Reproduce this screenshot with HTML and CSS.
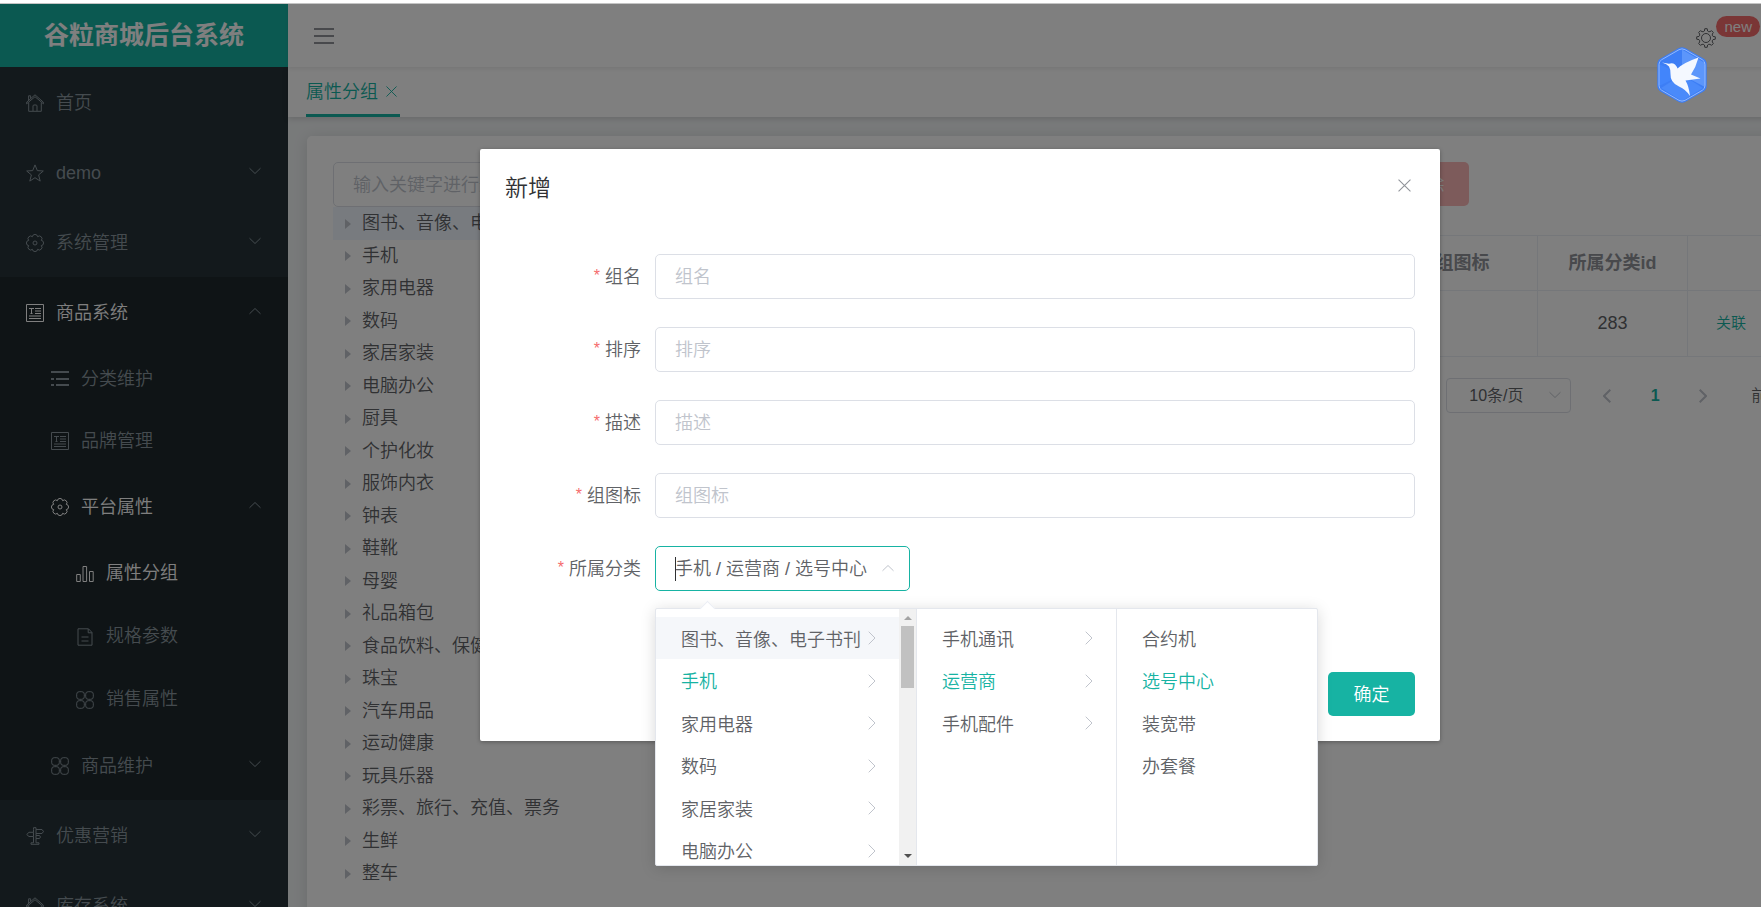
FILE: index.html
```html
<!DOCTYPE html>
<html lang="zh-CN">
<head>
<meta charset="utf-8">
<title>谷粒商城后台系统</title>
<link rel="stylesheet" href="styles.css">
</head>
<body>
<svg class="sprite" aria-hidden="true">
  <symbol id="i-home" viewBox="0 0 18 18"><path d="M.6 9.800v-1.600L9 .800l8.400 7.400v1.600L9 2.700zM2.600 6.300V1.800h2v2.700M2.700 8.500v8.800h12.600V8.500M7 17v-5q0-1 1-1h2q1 0 1 1v5"/></symbol>
  <symbol id="i-star" viewBox="0 0 18 18"><path d="m9 .9 2.300 5.700 6 .4-4.700 3.900 1.600 6.200L9 13.700l-5.200 3.400 1.600-6.200L.7 7l6-.4z"/></symbol>
  <symbol id="i-gear" viewBox="0 0 18 18"><circle cx="9" cy="9" r="2"/><path d="M15.300 11.600a2.620 2.620 0 0 1-3.700 3.700 2.620 2.620 0 0 1-5.200 0 2.620 2.620 0 0 1-3.700-3.700 2.620 2.620 0 0 1 0-5.200 2.620 2.620 0 0 1 3.700-3.700 2.620 2.620 0 0 1 5.200 0 2.620 2.620 0 0 1 3.700 3.700 2.620 2.620 0 0 1 0 5.200z"/></symbol>
  <symbol id="i-cog" viewBox="0 0 20 20"><circle cx="10" cy="10" r="4.500"/><path d="M8.800.7H11.200L11.600 3Q12.800 4.200 14 3.600L15.600 2.700 17.300 4.400 16.400 6Q15.800 7.200 17 8.400L19.300 8.800V11.200L17 11.600Q15.800 12.800 16.400 14L17.300 15.600 15.600 17.300 14 16.400Q12.800 15.800 11.600 17L11.200 19.300H8.800L8.400 17Q7.200 15.800 6 16.400L4.400 17.300 2.700 15.600 3.600 14Q4.200 12.800 3 11.600L.7 11.200V8.800L3 8.400Q4.200 7.200 3.600 6L2.700 4.400 4.400 2.700 6 3.600Q7.200 4.200 8.400 3Z"/></symbol>
  <symbol id="i-article" viewBox="0 0 18 18"><path d="M.5.500h17v17H.5zM3 4.500h5M5.500 4.500v5M4.500 9.500h2M9 4.500h6M9 7h6M9 9.500h6M3 12h12M3 14.500h12"/></symbol>
  <symbol id="i-list" viewBox="0 0 18 18"><path stroke-width="2" d="M0 2h18M0 9h3M5 9h13M0 15h3M5 15h13"/></symbol>
  <symbol id="i-bars" viewBox="0 0 18 18"><path d="M.7 9.500h3.600v7H.7zM7 1.500h3.600v15H7zM13.500 6.500h3.700v10h-3.700z"/></symbol>
  <symbol id="i-doc" viewBox="0 0 18 18"><path d="M2 .8h10.500L16 4.500v12.700H2zM12.200 1v3.800H16M5.500 9h7M5.500 13h7"/></symbol>
  <symbol id="i-grid" viewBox="0 0 18 18"><rect x=".7" y=".7" width="7.600" height="7.600" rx="2.500"/><rect x="9.700" y=".7" width="7.600" height="7.600" rx="2.500"/><rect x=".7" y="9.700" width="7.600" height="7.600" rx="2.500"/><rect x="9.700" y="9.700" width="7.600" height="7.600" rx="2.500"/></symbol>
  <symbol id="i-sign" viewBox="0 0 18 18"><path d="M7.500 2.500V.7h2.500v1.800h6l1.500 2L16 6.500h-6v2h3.500l1 1.500-1 1.500H10v4.300h3v1.500H5v-1.500h2.500V9.500H3L.7 7.500 3 5.300h4.500zM7.500 5.300v4.200M10 2.500v4M10 8.500v3"/></symbol>
  <symbol id="i-down" viewBox="0 0 12 8"><path d="m.5 1.200 5.500 5.300 5.500-5.300"/></symbol>
  <symbol id="i-up" viewBox="0 0 12 8"><path d="M.5 6.800 6 1.500l5.500 5.300"/></symbol>
  <symbol id="i-right" viewBox="0 0 8 14"><path d="m.7.700 6.300 6.300-6.300 6.300"/></symbol>
  <symbol id="i-left" viewBox="0 0 8 14"><path d="M7.300.700 1 7l6.300 6.300"/></symbol>
  <symbol id="i-close" viewBox="0 0 12 12"><path d="m.5.500 11 11M11.500.500l-11 11"/></symbol>
  <symbol id="i-menu" viewBox="0 0 20 16"><path d="M0 1h20M0 8h20M0 15h20"/></symbol>
</svg>

<div class="app">
  <aside class="sidebar">
    <h1 class="brand">谷粒商城后台系统</h1>
    <nav>
      <ul class="menu">
        <li><a class="item" href="#"><svg class="icon"><use href="#i-home"/></svg>首页</a></li>
        <li><a class="item" href="#"><svg class="icon"><use href="#i-star"/></svg>demo<svg class="fold"><use href="#i-down"/></svg></a></li>
        <li><a class="item" href="#"><svg class="icon"><use href="#i-gear"/></svg>系统管理<svg class="fold"><use href="#i-down"/></svg></a></li>
        <li class="open">
          <a class="item lit" href="#"><svg class="icon"><use href="#i-article"/></svg>商品系统<svg class="fold"><use href="#i-up"/></svg></a>
          <ul class="menu">
            <li><a class="item leaf2" href="#"><svg class="icon"><use href="#i-list"/></svg>分类维护</a></li>
            <li><a class="item leaf2" href="#"><svg class="icon"><use href="#i-article"/></svg>品牌管理</a></li>
            <li>
              <a class="item sub2 lit" href="#"><svg class="icon"><use href="#i-gear"/></svg>平台属性<svg class="fold"><use href="#i-up"/></svg></a>
              <ul class="menu">
                <li><a class="item leaf3 lit" href="#"><svg class="icon"><use href="#i-bars"/></svg>属性分组</a></li>
                <li><a class="item leaf3" href="#"><svg class="icon"><use href="#i-doc"/></svg>规格参数</a></li>
                <li><a class="item leaf3" href="#"><svg class="icon"><use href="#i-grid"/></svg>销售属性</a></li>
              </ul>
            </li>
            <li><a class="item sub2" href="#"><svg class="icon"><use href="#i-grid"/></svg>商品维护<svg class="fold"><use href="#i-down"/></svg></a></li>
          </ul>
        </li>
        <li><a class="item" href="#"><svg class="icon"><use href="#i-sign"/></svg>优惠营销<svg class="fold"><use href="#i-down"/></svg></a></li>
        <li><a class="item" href="#"><svg class="icon"><use href="#i-home"/></svg>库存系统<svg class="fold"><use href="#i-down"/></svg></a></li>
      </ul>
    </nav>
  </aside>

  <div class="main">
    <header class="topbar">
      <button class="plain" type="button" aria-label="折叠菜单"><svg class="burger"><use href="#i-menu"/></svg></button>
      <a class="settings" href="#" aria-label="设置"><svg class="cog"><use href="#i-cog"/></svg><sup class="badge">new</sup></a>
    </header>
    <div class="tabs">
      <div class="tab"><a href="#">属性分组</a><button class="plain" type="button" aria-label="关闭标签"><svg class="tab-close"><use href="#i-close"/></svg></button></div>
    </div>
    <main class="content">
      <section class="card">
        <div class="tree-pane">
          <input class="box" type="text" placeholder="输入关键字进行过滤" aria-label="过滤分类">
          <ul class="tree">
            <li class="current">图书、音像、电子书刊</li>
            <li>手机</li><li>家用电器</li><li>数码</li><li>家居家装</li><li>电脑办公</li><li>厨具</li>
            <li>个护化妆</li><li>服饰内衣</li><li>钟表</li><li>鞋靴</li><li>母婴</li><li>礼品箱包</li>
            <li>食品饮料、保健食品</li><li>珠宝</li><li>汽车用品</li><li>运动健康</li><li>玩具乐器</li>
            <li>彩票、旅行、充值、票务</li><li>生鲜</li><li>整车</li>
          </ul>
        </div>
        <div class="table-pane">
          <div class="toolbar"><button class="btn danger" type="button" disabled>批量删除</button></div>
          <table class="grid">
            <colgroup><col><col class="c-mid"><col class="c-mid"><col class="c-ops"></colgroup>
            <thead><tr><th></th><th>组图标</th><th>所属分类id</th><th></th></tr></thead>
            <tbody><tr><td></td><td></td><td>283</td><td class="ops"><a href="#">关联</a></td></tr></tbody>
          </table>
          <div class="pager">
            <div class="size">
              <select aria-label="每页条数"><option>10条/页</option></select>
              <svg class="fold"><use href="#i-down"/></svg>
            </div>
            <button class="plain" type="button" aria-label="上一页"><svg class="step"><use href="#i-left"/></svg></button>
            <button class="plain page" type="button">1</button>
            <button class="plain" type="button" aria-label="下一页"><svg class="step"><use href="#i-right"/></svg></button>
            <span class="jump">前往</span>
          </div>
        </div>
      </section>
    </main>
  </div>

  <div class="mask">
    <div class="dialog" role="dialog" aria-labelledby="dialog-title">
      <div class="dialog-head">
        <h2 id="dialog-title">新增</h2>
        <button class="plain" type="button" aria-label="关闭"><svg class="dialog-close"><use href="#i-close"/></svg></button>
      </div>
      <form class="form">
        <div class="row"><label for="f-name">组名</label><input class="box" id="f-name" type="text" placeholder="组名"></div>
        <div class="row"><label for="f-sort">排序</label><input class="box" id="f-sort" type="text" placeholder="排序"></div>
        <div class="row"><label for="f-desc">描述</label><input class="box" id="f-desc" type="text" placeholder="描述"></div>
        <div class="row"><label for="f-icon">组图标</label><input class="box" id="f-icon" type="text" placeholder="组图标"></div>
        <div class="row">
          <label for="f-cat">所属分类</label>
          <div class="cascader">
            <input class="box focus" id="f-cat" type="text" value="手机 / 运营商 / 选号中心">
            <span class="caret"></span>
            <svg class="cascader-up"><use href="#i-up"/></svg>
            <div class="panel">
              <ul class="options first">
                <li class="hover">图书、音像、电子书刊<svg><use href="#i-right"/></svg></li>
                <li class="chosen">手机<svg><use href="#i-right"/></svg></li>
                <li>家用电器<svg><use href="#i-right"/></svg></li>
                <li>数码<svg><use href="#i-right"/></svg></li>
                <li>家居家装<svg><use href="#i-right"/></svg></li>
                <li>电脑办公<svg><use href="#i-right"/></svg></li>
              </ul>
              <div class="scroll"><i class="s-up"></i><i class="s-thumb"></i><i class="s-down"></i></div>
              <ul class="options">
                <li>手机通讯<svg><use href="#i-right"/></svg></li>
                <li class="chosen">运营商<svg><use href="#i-right"/></svg></li>
                <li>手机配件<svg><use href="#i-right"/></svg></li>
              </ul>
              <ul class="options">
                <li>合约机</li>
                <li class="chosen">选号中心</li>
                <li>装宽带</li>
                <li>办套餐</li>
              </ul>
            </div>
          </div>
        </div>
      </form>
      <div class="dialog-foot"><button class="btn primary" type="button">确定</button></div>
    </div>
  </div>
</div>

<svg class="bird" viewBox="0 0 50 56" aria-hidden="true">
  <path fill="#3d7ef5" d="M21.500 1.200q3.500-2 7 0l18 10.300q3.200 2 3.200 5.700v21.600q0 3.700-3.200 5.700l-18 10.300q-3.500 2-7 0l-18-10.300Q.3 42.500.3 38.800V17.200q0-3.700 3.200-5.700z"/>
  <path fill="#5c96fb" d="M25 2.500 48 16v24L25 28z"/>
  <path fill="#4285fb" d="M2 17v22l23-11z"/>
  <path fill="#4a8afa" d="m4 41 21-13 21 13-21 13z"/>
  <path fill="none" stroke="#93b9fd" d="M22 2.700q3-1.700 6 0l17.300 10q2.700 1.600 2.700 4.800v21q0 3.200-2.700 4.800L28 53.300q-3 1.700-6 0L4.700 43.300Q2 41.700 2 38.500v-21q0-3.200 2.700-4.800z"/>
  <path fill="#f4f8ff" d="M5 15.500l7 1.200q3.500-1.200 6 .8 2 2.200 2.500 4Q27 15.500 41.500 10.500 39 20 34 27.500l9.500 4L28.500 33.500q3.500 6 4.500 15.500-4-6.500-11-9.500-9-4-8.500-12.500 0-5-1.500-7.500-2-2.500-7-4z"/>
</svg>
</body>
</html>
```
FILE: styles.css
```css
* { box-sizing: border-box; }
body {
  margin: 0;
  padding-top: 3px;
  height: 100vh;
  overflow: hidden;
  background: #fff;
  font: 18px/1.5 "Liberation Sans", "Noto Sans CJK SC", sans-serif;
  font-weight: 350;
  color: #606266;
}
ul { list-style: none; margin: 0; padding: 0; }
a { color: inherit; text-decoration: none; }
h1, h2 { margin: 0; }
input, select, button { font: inherit; color: inherit; }
svg { fill: none; stroke: currentColor; flex: none; }
.sprite { position: absolute; width: 0; height: 0; }
.plain { border: 0; padding: 0; background: none; display: flex; align-items: center; }

.app {
  position: relative;
  display: flex;
  min-width: 1920px;
  height: 100%;
  overflow: hidden;
  border-top: 1px solid #c4c4c4;
}

/* sidebar */
.sidebar { width: 288px; flex: none; background: #263238; color: #8a979e; }
.brand {
  height: 63px;
  line-height: 63px;
  background: #17b3a3;
  color: #fff;
  font-size: 25px;
  font-weight: 700;
  text-align: center;
}
.item { display: flex; align-items: center; height: 70px; padding: 2px 27px 0 26px; }
.icon { width: 18px; height: 18px; margin-right: 12px; overflow: visible; }
.fold { width: 12px; height: 8px; margin-left: auto; }
.item .fold { margin-bottom: 5px; }
.open { background: #1e282c; }
.lit { color: #fff; }
.lit .fold { color: #8a979e; }
.leaf2 { height: 62px; padding-left: 51px; }
.sub2 { padding-left: 51px; }
.leaf3 { height: 63px; padding-left: 76px; }

/* header and tabs */
.main { flex: 1; min-width: 0; display: flex; flex-direction: column; background: #f1f4f5; }
.topbar {
  position: relative;
  z-index: 1;
  display: flex;
  justify-content: space-between;
  align-items: center;
  height: 63px;
  flex: none;
  padding: 0 160px 0 26px;
  background: #fff;
  box-shadow: 0 2px 4px rgba(0, 0, 0, .08);
}
.burger { width: 20px; height: 16px; stroke-width: 2; color: #909399; }
.settings { display: flex; align-items: center; height: 100%; }
.cog { width: 20px; height: 20px; margin-top: 4px; }
.badge {
  align-self: flex-start;
  margin-top: 12px;
  padding: 0 8px;
  border-radius: 11px;
  background: #f56c6c;
  color: #fff;
  font-size: 15px;
  line-height: 21px;
}
.tabs {
  height: 50px;
  flex: none;
  padding: 0 18px;
  display: flex;
  background: #fff;
  box-shadow: 0 2px 6px rgba(0, 0, 0, .14);
}
.tab {
  display: flex;
  align-items: center;
  gap: 8px;
  padding: 3px 3px 0 0;
  border-bottom: 3px solid #17b3a3;
  color: #17b3a3;
}
.tab-close { width: 11px; height: 11px; margin-bottom: 2px; }

/* content */
.content { padding: 19px; }
.card {
  display: grid;
  grid-template-columns: 1fr 3fr;
  gap: 25px;
  padding: 26px;
  border-radius: 5px;
  background: #fff;
  box-shadow: 0 2px 15px rgba(0, 0, 0, .12);
}
.box {
  display: block;
  width: 100%;
  height: 45px;
  padding: 2px 19px 0;
  border: 1px solid #dcdfe6;
  border-radius: 5px;
  background: #fff;
  outline: 0;
}
.box::placeholder { color: #c0c4cc; opacity: 1; }
.tree li { display: flex; align-items: center; height: 32px; padding-left: 12px; }
.tree li:nth-child(odd) { height: 33px; }
.tree li::before {
  content: "";
  margin-right: 11px;
  border: 5px solid transparent;
  border-left: 6px solid #c0c4cc;
  border-right: 0;
}
.tree .current { background: #f0f7ff; }

.btn {
  height: 44px;
  min-width: 87px;
  padding: 2px 25px 0;
  border: 0;
  border-radius: 5px;
  color: #fff;
}
.danger { background: #fab6b6; }
.primary { background: #17b3a3; }
.toolbar { display: flex; justify-content: flex-end; max-width: 732px; margin-bottom: 29px; }
.grid { width: 100%; table-layout: fixed; border-collapse: collapse; }
.c-mid { width: 150px; }
.c-ops { width: 187px; }
.grid th, .grid td { border: 1px solid #ebeef5; padding: 0; text-align: center; }
.grid th { height: 55px; color: #909399; font-weight: 700; }
.grid td { height: 66px; }
.grid .ops { padding: 0 0 0 28px; text-align: left; font-size: 15px; color: #17b3a3; }

.pager { display: flex; align-items: center; margin-top: 21px; font-size: 16px; padding-left: 709px; }
.size { position: relative; flex: none; width: 125px; }
.size select {
  appearance: none;
  display: block;
  width: 100%;
  height: 35px;
  padding: 0 22px;
  border: 1px solid #dcdfe6;
  border-radius: 4px;
  background: #fff;
}
.size .fold { position: absolute; right: 10px; top: 13px; color: #c0c4cc; }
.pager .plain { flex: none; justify-content: center; width: 48px; color: #909399; }
.pager .plain:nth-of-type(1) { margin-left: 12px; }
.pager .page { color: #17b3a3; font-weight: 700; }
.step { width: 8px; height: 14px; stroke-width: 2; color: #c0c4cc; }
.jump { flex: none; margin-left: 24px; }

/* dialog */
.mask { position: absolute; inset: 0; z-index: 5; background: rgba(0, 0, 0, .5); }
.dialog {
  width: 50%;
  margin: 145px auto 0;
  border-radius: 2px;
  background: #fff;
  box-shadow: 0 1px 4px rgba(0, 0, 0, .3);
}
.dialog-head {
  display: flex;
  align-items: center;
  justify-content: space-between;
  height: 76px;
  padding: 0 29px 0 25px;
  color: #303133;
}
.dialog-head h2 { padding-top: 2px; font-size: 23px; font-weight: 350; }
.dialog-close { width: 13px; height: 13px; margin-bottom: 3px; color: #909399; }
.form { display: grid; gap: 28px; padding: 29px 25px 0; }
.row { display: grid; grid-template-columns: 136px 1fr; column-gap: 14px; align-items: center; }
.row label { padding-top: 2px; text-align: right; }
.row label::before { content: "*"; margin-right: 5px; font-size: 16px; vertical-align: 2px; line-height: 1; color: #f56c6c; }
.cascader { position: relative; width: 255px; }
.focus { padding: 0 19px 3px; border-color: #17b3a3; }
.caret { position: absolute; left: 20px; top: 11px; width: 1px; height: 24px; background: #303133; }
.cascader-up { position: absolute; right: 15px; top: 18px; width: 14px; height: 8px; color: #c0c4cc; }
.dialog-foot { display: flex; justify-content: flex-end; padding: 81px 25px 25px; }

/* cascader panel */
.panel {
  position: absolute;
  z-index: 2;
  left: 0;
  top: 62px;
  display: flex;
  height: 258px;
  border: 1px solid #e4e7ed;
  border-radius: 2px;
  background: #fff;
  box-shadow: 0 2px 15px rgba(0, 0, 0, .15);
}
.panel::before {
  content: "";
  position: absolute;
  left: 46px;
  top: -6px;
  width: 10px;
  height: 10px;
  border: 1px solid #ebeef5;
  border-width: 1px 0 0 1px;
  background: #fff;
  transform: rotate(45deg);
}
.options { width: 200px; padding-top: 8px; overflow: hidden; border-left: 1px solid #e4e7ed; }
.options.first { width: 243px; border: 0; }
.options:last-child { width: 201px; }
.options li {
  display: flex;
  align-items: center;
  justify-content: space-between;
  height: 42px;
  padding: 4px 23px 0 25px;
  white-space: nowrap;
}
.options li:nth-child(even) { height: 43px; }
.options svg { width: 8px; height: 14px; margin-bottom: 4px; color: #c0c4cc; }
.options .hover { background: #f5f7fa; }
.options .chosen { color: #17b3a3; }
.scroll {
  display: flex;
  flex-direction: column;
  align-items: center;
  width: 17px;
  padding: 7px 0;
  background: #f1f1f1;
}
.s-up { border: 4px solid transparent; border-top: 0; border-bottom-color: #a3a3a3; }
.s-thumb { width: 13px; height: 62px; margin-top: 6px; background: #c1c1c1; }
.s-down { margin-top: auto; border: 4px solid transparent; border-bottom: 0; border-top-color: #505050; }

.bird { position: fixed; z-index: 9; top: 47px; right: 54px; width: 50px; height: 56px; stroke: none; }
```
